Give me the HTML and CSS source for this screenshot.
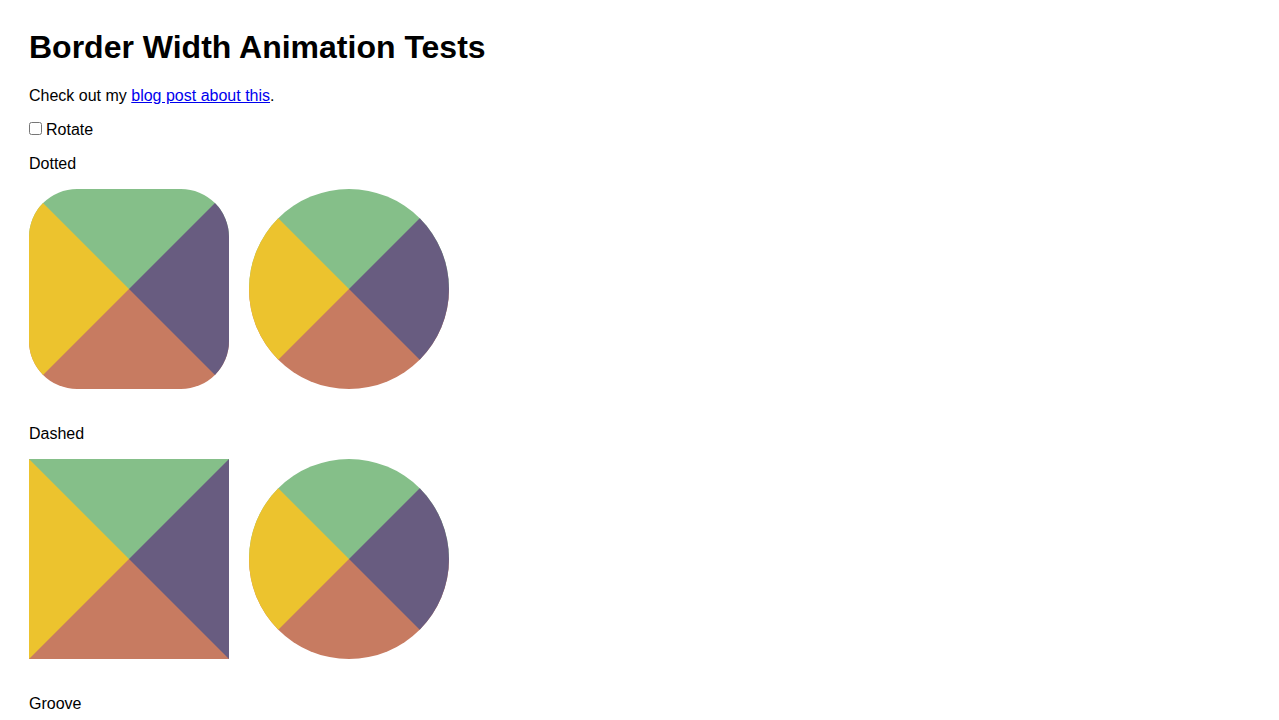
FILE: index.html
```html
<!DOCTYPE html>
<html lang="en">
<head>
    <meta charset="UTF-8">
    <meta name="viewport" content="width=device-width, initial-scale=1.0">
    <title>Border Width Animation Tests</title>
    <link rel="stylesheet" href="styles.css">
</head>
<body>
    <h1>Border Width Animation Tests</h1>
    <p>Check out my <a href="#">blog post about this</a>.</p>

    <p class="toggle">
        <label><input type="checkbox" id="rotate">Rotate</label>
    </p>

    <section class="test">
        <p class="test-title">Dotted</p>
        <div class="shapes">
            <div class="shape rounded"></div>
            <div class="shape circle"></div>
        </div>
    </section>

    <section class="test">
        <p class="test-title">Dashed</p>
        <div class="shapes">
            <div class="shape"></div>
            <div class="shape circle"></div>
        </div>
    </section>

    <section class="test">
        <p class="test-title">Groove</p>
        <div class="shapes">
            <div class="shape rounded"></div>
            <div class="shape circle"></div>
        </div>
    </section>
</body>
</html>
```

FILE: styles.css
```css
body {
    font-family: "Liberation Sans", Arial, sans-serif;
    font-size: 16px;
    color: #000;
    background: #fff;
    margin: 0;
    padding: 0 29px;
}

h1 {
    font-size: 32px;
    font-weight: bold;
    margin: 29px 0 21px;
}

p {
    margin: 0 0 16px;
}

a {
    color: #0000ee;
}

.toggle {
    margin-top: -2px;
}

.toggle input {
    margin: 3px 4px 3px 0;
}

.test {
    margin-bottom: 36px;
}

.test-title {
    margin-bottom: 16px;
}

.shapes {
    display: flex;
    gap: 20px;
}

.shape {
    width: 0;
    height: 0;
    border-style: solid;
    border-width: 100px;
    border-color: #85bf89 #685c80 #c77b61 #ecc32e;
}

.shape.rounded {
    border-radius: 48px;
}

.shape.circle {
    border-radius: 50%;
}
```
